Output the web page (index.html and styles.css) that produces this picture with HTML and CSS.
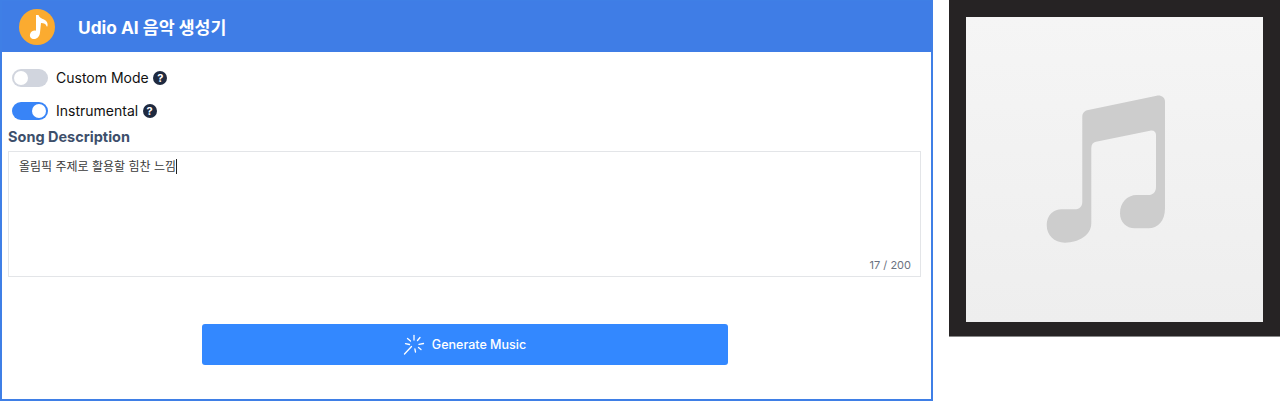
FILE: index.html
```html
<!DOCTYPE html>
<html lang="ko">
<head>
    <meta charset="UTF-8">
    <meta name="viewport" content="width=device-width, initial-scale=1.0">
    <title>Udio AI 음악 생성기</title>
    <link rel="stylesheet" href="styles.css">
</head>
<body>
    <div class="panel">
        <div class="panel-header">
            <div class="logo">
                <svg width="36" height="36" viewBox="0 0 36 36">
                    <path d="M17 6h2.500c.5 2.500 3 3.500 5.500 4.500c3 1.300 4 4 3.500 6.500c-.2 .7-.9 .7-1 0c-.5-1.800-2.500-3-5.500-3l-1 9.500c-.4 4-2.800 6.500-6 6.500c-2.800 0-4.500-2-4-4.500c.5-2.800 3.500-4.500 6-3.800z" fill="#fff"/>
                </svg>
            </div>
            <h1>Udio AI 음악 생성기</h1>
        </div>
        <div class="panel-body">
            <div class="toggle-row">
                <span class="toggle"></span>
                <span class="toggle-label">Custom Mode</span>
                <span class="help">?</span>
            </div>
            <div class="toggle-row">
                <span class="toggle on"></span>
                <span class="toggle-label">Instrumental</span>
                <span class="help">?</span>
            </div>
            <div class="field-label">Song Description</div>
            <div class="textarea">
                <span>올림픽 주제로 활용할 힘찬 느낌</span><span class="caret"></span>
                <span class="counter">17 / 200</span>
            </div>
            <div class="actions">
                <button type="button" class="generate">
                    <svg width="22" height="22" viewBox="0 0 22 22" fill="none" stroke="#fff" stroke-width="1.300" stroke-linecap="round">
                        <path d="M11 1.500v4.500"/>
                        <path d="M17 3.500l-2.500 3"/>
                        <path d="M20.500 9.500l-4.500 .8"/>
                        <path d="M18 15.500l-2.500-2"/>
                        <path d="M12.500 18l-.6-3"/>
                        <path d="M8.500 12.500L1.500 20"/>
                        <path d="M6.500 10.500l-4-.8"/>
                        <path d="M7.500 7l-3-2.500"/>
                    </svg>
                    <span>Generate Music</span>
                </button>
            </div>
        </div>
    </div>

    <div class="album">
        <div class="album-inner">
            <svg width="120" height="149" viewBox="0 0 120 149">
                <path d="M36.300 21.700C36.300 18 38.500 15.800 42.300 15L110.700 .7C115.500 0 119 2.500 119 6.700V113.300C119 126 112 133.300 102.300 133.300H89C80 133.300 74 127 74 118.300C74 108 81 100 90.700 100H102.300C107 100 110 97 110 91.700V40C110 36.500 107.500 35 104 35.700L50 46.700C47 47.300 45.300 49.500 45.300 53.300V128.300C45.300 140 33 147.700 19 147.700C8 147.700 .7 140 .7 130C.7 120 8 114.300 15.700 114.300H29C33.500 114.300 36.300 111.500 36.300 106.700Z" fill="#cdcdcd"/>
            </svg>
        </div>
    </div>
</body>
</html>
```

FILE: styles.css
```css
* {
    margin: 0;
    padding: 0;
    box-sizing: border-box;
}

body {
    font-family: Inter, "Noto Sans CJK KR", sans-serif;
    background-color: #fff;
    color: #111;
    display: flex;
    align-items: flex-start;
    gap: 16px;
    height: 401px;
    overflow: hidden;
}

.panel {
    width: 933px;
    height: 401px;
    border: 2px solid #3f7fe6;
    border-top-width: 1px;
}

.panel-header {
    height: 51px;
    background-color: #3f7de6;
    display: flex;
    align-items: center;
    gap: 23px;
    padding-left: 17px;
}

.logo {
    width: 36px;
    height: 36px;
    border-radius: 50%;
    background-color: #fbab30;
}

.panel-header h1 {
    font-size: 17.300px;
    font-weight: 700;
    color: #fff;
}

.panel-body {
    padding: 17px 10px 0 6px;
}

.toggle-row {
    display: flex;
    align-items: center;
    height: 18px;
    margin-bottom: 15px;
    padding-left: 4px;
}

.toggle {
    width: 36px;
    height: 18px;
    border-radius: 9px;
    background-color: #d1d5de;
    padding: 2px;
    margin-right: 8px;
    display: flex;
}

.toggle::after {
    content: "";
    width: 14px;
    height: 14px;
    border-radius: 50%;
    background-color: #fff;
}

.toggle.on {
    background-color: #3884f7;
    justify-content: flex-end;
}

.toggle-label {
    font-size: 14px;
    margin-right: 4.500px;
    padding-bottom: 2px;
}

.help {
    width: 14px;
    height: 14px;
    border-radius: 50%;
    background-color: #1f2a40;
    color: #fff;
    font-size: 11px;
    font-weight: 700;
    line-height: 14px;
    text-align: center;
}

.field-label {
    font-size: 14.500px;
    font-weight: 700;
    color: #3d4f6b;
    line-height: 18px;
    margin-top: -7px;
    margin-bottom: 5px;
}

.textarea {
    position: relative;
    width: 913px;
    height: 126px;
    border: 1px solid #e3e5e8;
    padding: 6px 10px;
    font-size: 12px;
    line-height: 18px;
    color: #3a3a3a;
}

.caret {
    display: inline-block;
    width: 1px;
    height: 15px;
    background-color: #222;
    vertical-align: -3px;
}

.counter {
    position: absolute;
    right: 9px;
    bottom: 3px;
    font-size: 11px;
    line-height: 16px;
    color: #6b7280;
}

.actions {
    display: flex;
    justify-content: center;
    padding-top: 47px;
}

.generate {
    width: 526px;
    height: 41px;
    border: none;
    border-radius: 3px;
    background-color: #3388ff;
    color: #fff;
    font-family: inherit;
    font-size: 12.500px;
    font-weight: 500;
    display: flex;
    align-items: center;
    justify-content: center;
    gap: 7px;
}

.album {
    width: 331px;
    height: 337px;
    background-color: #262324;
    padding: 17px;
    border-bottom: 1px solid #888;
}

.album-inner {
    height: 305px;
    background: linear-gradient(#f5f5f5, #eeeeee);
    display: flex;
    align-items: center;
    justify-content: center;
    padding-right: 17px;
}
```
